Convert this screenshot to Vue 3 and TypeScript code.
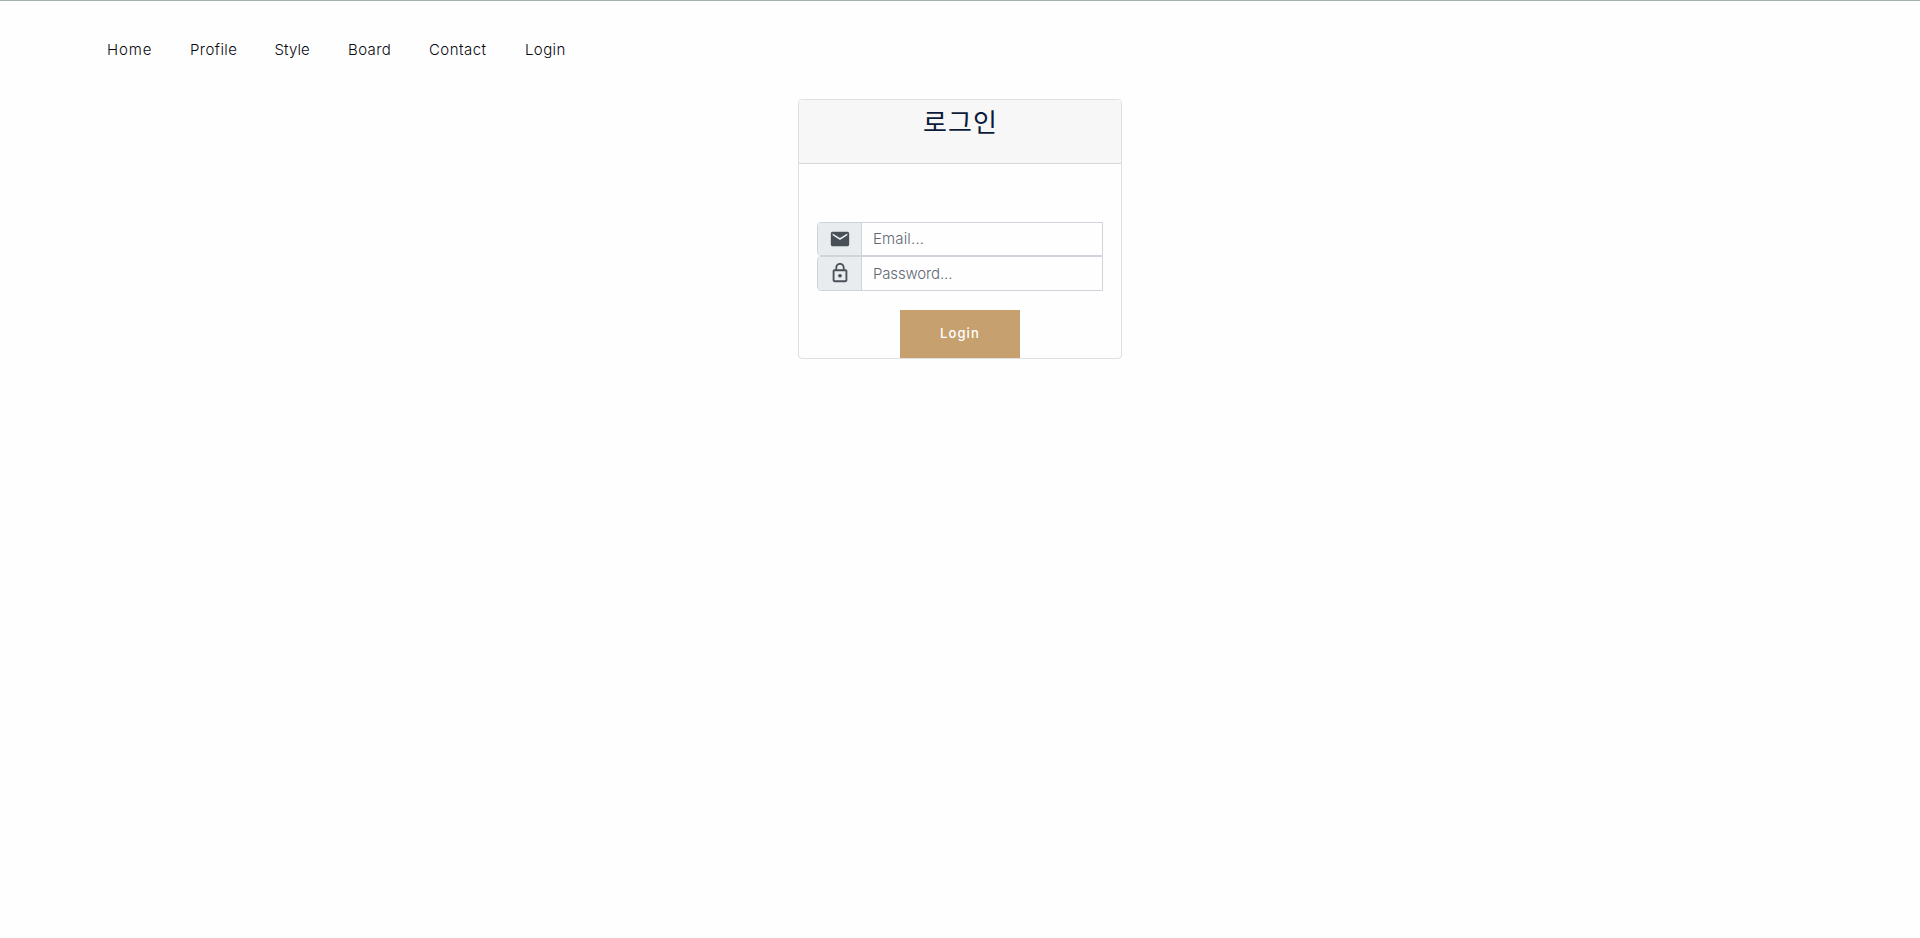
<script setup lang="ts">
interface NavItem {
  label: string
  name: string
}

const navItems: NavItem[] = [
  { label: 'Home', name: 'home' },
  { label: 'Profile', name: 'profile' },
  { label: 'Style', name: 'style' },
  { label: 'Board', name: 'board' },
  { label: 'Contact', name: 'contact' },
  { label: 'Login', name: 'login' },
]
</script>

<template>
  <div class="page">
    <nav class="nav">
      <a v-for="item in navItems" :key="item.name" class="nav-item" :class="item.name"><span>{{ item.label }}</span></a>
    </nav>
    <form class="card" @submit.prevent>
      <header class="card-header"><h4>로그인</h4></header>
      <div class="card-body">
        <div class="group first">
          <span class="addon">
            <svg width="22" height="22" viewBox="0 0 24 24"><path d="M20 4H4c-1.1 0-1.99.9-1.99 2L2 18c0 1.1.9 2 2 2h16c1.1 0 2-.9 2-2V6c0-1.1-.9-2-2-2zm0 4l-8 5-8-5V6l8 5 8-5v2z" /></svg>
          </span>
          <input class="email" type="email" placeholder="Email..." />
        </div>
        <div class="group second">
          <span class="addon">
            <svg width="22" height="22" viewBox="0 0 24 24"><path d="M12 17c1.1 0 2-.9 2-2s-.9-2-2-2-2 .9-2 2 .9 2 2 2zm6-9h-1V6c0-2.76-2.24-5-5-5S7 3.24 7 6v2H6c-1.1 0-2 .9-2 2v10c0 1.1.9 2 2 2h12c1.1 0 2-.9 2-2V10c0-1.1-.9-2-2-2zM8.9 6c0-1.71 1.39-3.1 3.1-3.1s3.1 1.39 3.1 3.1v2H8.9V6zM18 20H6V10h12v10z" /></svg>
          </span>
          <input class="password" type="password" placeholder="Password..." />
        </div>
      </div>
      <button type="submit" class="submit">Login</button>
    </form>
  </div>
</template>

<style>
body {
  margin: 0;
  background: #fefefe;
}
</style>

<style scoped>
.page {
  box-sizing: border-box;
  height: 938px;
  border-top: 1px solid #a5afab;
  background: #fefefe;
  font-family: Inter, 'Noto Sans CJK KR', sans-serif;
  font-weight: 300;
}
.nav {
  display: flex;
  height: 98px;
  padding-left: 107px;
}
.nav-item {
  height: 98px;
  line-height: 98px;
  font-size: 15px;
  color: #08080f;
  white-space: nowrap;
}
.home { width: 83px; letter-spacing: 0.9px; }
.profile { width: 84.5px; letter-spacing: 0.45px; }
.style { width: 73.5px; letter-spacing: 0.1px; }
.board { width: 81px; letter-spacing: 0.4px; }
.contact { width: 96px; letter-spacing: 0.45px; }
.login { letter-spacing: 0.4px; }
.card {
  box-sizing: border-box;
  width: 324px;
  height: 260px;
  margin: 0 auto;
  border: 1px solid #dfdfdf;
  border-radius: 4px;
}
.card-header {
  box-sizing: border-box;
  height: 64px;
  border-bottom: 1px solid #d8d8d8;
  border-radius: 3px 3px 0 0;
  background: #f7f7f7;
}
h4 {
  margin: 0;
  padding-left: 1px;
  font-family: 'Noto Sans CJK KR', sans-serif;
  font-size: 26px;
  font-weight: 400;
  line-height: 41px;
  letter-spacing: 1px;
  text-align: center;
  color: #0b1b39;
}
.card-body {
  padding: 58px 18px 19px;
}
.group {
  box-sizing: border-box;
  display: flex;
  border: 1px solid #ced4da;
  border-radius: 4px 0 0 4px;
}
.first { height: 34px; }
.second { height: 35px; }
.addon {
  box-sizing: border-box;
  display: flex;
  width: 44px;
  align-items: center;
  justify-content: center;
  border-right: 1px solid #ced4da;
  border-radius: 3px 0 0 3px;
  background: #e9ecef;
}
.addon svg {
  fill: #495057;
}
.second svg {
  margin-bottom: 2px;
}
input {
  box-sizing: border-box;
  flex: 1;
  min-width: 0;
  padding: 0 0 1px 11px;
  border: 0;
  outline: 0;
  background: transparent;
  font-family: inherit;
  font-size: 15px;
  font-weight: 300;
}
input::placeholder {
  color: #5f6872;
  opacity: 1;
}
.email { letter-spacing: 0.15px; }
.password { letter-spacing: -0.15px; }
.submit {
  display: block;
  width: 120px;
  height: 48px;
  margin: 0 auto;
  padding: 0 0 2px;
  border: 0;
  background: #c6a06e;
  color: #fff;
  font-family: inherit;
  font-size: 13px;
  font-weight: 500;
  letter-spacing: 1.1px;
}
</style>
